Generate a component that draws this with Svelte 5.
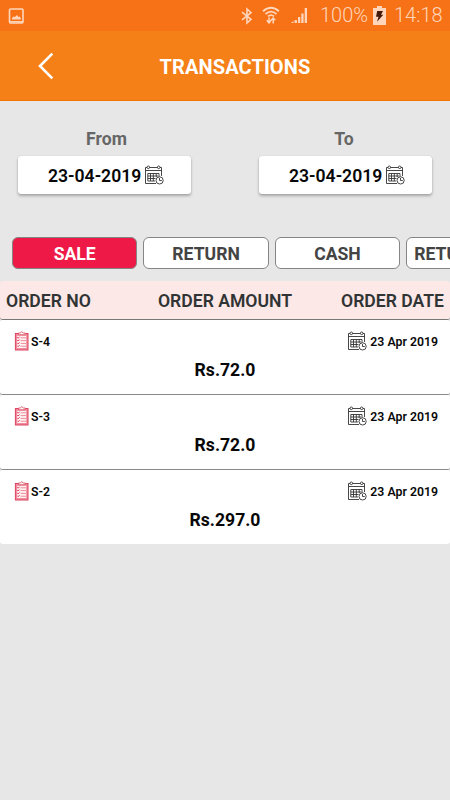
<script lang="ts">
    const tabs = ['SALE', 'RETURN', 'CASH', 'RETURN CASH'];
    let active = $state(0);

    const ranges = [
        { label: 'From', date: '23-04-2019' },
        { label: 'To', date: '23-04-2019' },
    ];

    const orders = [
        { no: 'S-4', amount: 'Rs.72.0', date: '23 Apr 2019' },
        { no: 'S-3', amount: 'Rs.72.0', date: '23 Apr 2019' },
        { no: 'S-2', amount: 'Rs.297.0', date: '23 Apr 2019' },
    ];
</script>

{#snippet calendar()}
    <svg class="calendar" viewBox="0 0 20 20" aria-hidden="true">
        <path d="M3 2.5H1.5V18.5H12M5.5 2.5H13.5M16 2.5H17.5V11M1.5 5.5H17.5" />
        <path d="M3.8 8.5H15V12M3.8 8.5V16H11M3.8 11H14M3.8 13.5H11.5M6.5 8.5V16M9.3 8.5V16M12.2 8.5V12" />
        <circle cx="4.3" cy="2.3" r="1.3" />
        <circle cx="14.7" cy="2.3" r="1.3" />
        <circle class="clock" cx="15.6" cy="15.4" r="3.6" />
        <path d="M15.5 13V15.5H17.8" />
    </svg>
{/snippet}

<div class="screen">
    <div class="status">
        <svg class="picture" width="16" height="16" viewBox="0 0 16 16" aria-hidden="true">
            <rect x="1.5" y="1" width="13.5" height="14" rx="1" fill="none" stroke="currentColor" stroke-width="1.6" />
            <path d="M4 11.5V10L5.5 8.5L7 9L9 7L10.5 9L11.5 8.5L12.8 10V11.5Z" fill="currentColor" />
            <path d="M1.5 13.8H15" stroke="currentColor" stroke-width="1.5" />
        </svg>
        <div class="indicators">
            <svg width="12" height="18" viewBox="0 0 12 18" fill="none" stroke="currentColor" stroke-width="1.6" aria-hidden="true">
                <path d="M1 5.2L10 12.4L6 16V2L10 5.6L1 12.8" />
            </svg>
            <svg class="wifi" width="18" height="19" viewBox="0 0 18 19" fill="none" stroke="currentColor" stroke-width="1.8" aria-hidden="true">
                <path d="M1 5.3Q9 -1.7 17 5.3M3.5 8Q9 3.2 14.5 8M6 10.4Q9 7.8 12 10.4" />
                <path d="M7 11.5V16.5M4.8 14.3L7 17L9 14.3M11.2 17.5V12.5M9 14.2L11.2 12L13.3 14.2" stroke-width="1.5" />
            </svg>
            <svg class="signal" width="18" height="17" viewBox="0 0 18 17" fill="currentColor" aria-hidden="true">
                <path d="M1 16L3.5 14V16ZM4.6 13H6.9V16H4.6ZM8 10H10.3V16H8ZM11.3 6.5H13.6V16H11.3ZM14.7 1H17V16H14.7Z" />
            </svg>
            <span class="percent">100%</span>
            <svg class="battery" width="13" height="19" viewBox="0 0 13 19" aria-hidden="true">
                <path d="M0 2H4V0H9V2H13V19H0Z" fill="currentColor" />
                <path d="M4.2 5H10L8 8.7H10.3L4 15.8L5.5 10.8H3Z" fill="#42190a" />
            </svg>
            <span class="time">14:18</span>
        </div>
    </div>

    <header>
        <button class="back" aria-label="Back">
            <svg width="16" height="28" viewBox="0 0 16 28" fill="none" stroke="#fff" stroke-width="2.6" aria-hidden="true">
                <path d="M14.3 1.6L2 14L14.3 26.4" />
            </svg>
        </button>
        <h1>TRANSACTIONS</h1>
    </header>

    <div class="ranges">
        {#each ranges as range}
            <div class="range">
                <span class="range-label">{range.label}</span>
                <button class="date">
                    <span>{range.date}</span>
                    {@render calendar()}
                </button>
            </div>
        {/each}
    </div>

    <div class="tabs">
        {#each tabs as tab, i}
            <button class="tab" class:active={active === i} onclick={() => (active = i)}>{tab}</button>
        {/each}
    </div>

    <div class="columns">
        <span>ORDER NO</span>
        <span>ORDER AMOUNT</span>
        <span>ORDER DATE</span>
    </div>

    {#each orders as order}
        <div class="order">
            <div class="info">
                <svg class="list" width="16" height="20" viewBox="0 0 16 20" fill="none" aria-hidden="true">
                    <rect x="1.4" y="2.5" width="12.6" height="16.5" fill="#f08c9d" stroke="#dc4560" />
                    <rect x="3.2" y="4.8" width="9" height="12.2" fill="#fff3f4" />
                    <path d="M4.5 3.8V2H6.2Q7.8 -.6 9.4 2H11.2V3.8Z" fill="#fff" stroke="#dc5268" stroke-width=".9" />
                    <path d="M6.6 6.8H12M6.6 9.6H12M6.6 12.4H12M6.6 15.2H12" stroke="#ed8a99" />
                    <path d="M3.4 6.4L4.2 7.2L5.5 5.8M3.4 9.2L4.2 10L5.5 8.6M3.4 12L4.2 12.8L5.5 11.4M3.4 14.8L4.2 15.6L5.5 14.2" stroke="#e0284a" />
                </svg>
                <span class="number">{order.no}</span>
                {@render calendar()}
                <span class="day">{order.date}</span>
            </div>
            <div class="amount">{order.amount}</div>
        </div>
    {/each}
</div>

<style>
    :global(body) {
        background: #e7e7e7;
    }

    .screen {
        width: 450px;
        height: 800px;
        overflow: hidden;
        background: #e7e7e7;
        color: #080808;
        font-family: Roboto, sans-serif;
    }

    button {
        padding: 0;
        border: 0;
        background: none;
        color: inherit;
        font: inherit;
        cursor: pointer;
    }

    svg {
        display: block;
        flex: none;
    }

    .status {
        display: flex;
        align-items: center;
        justify-content: space-between;
        box-sizing: border-box;
        height: 31px;
        padding: 0 7px 0 8px;
        background: #f77117;
        color: #ffd6bb;
    }

    .indicators {
        display: flex;
        align-items: center;
        font-size: 20px;
        font-weight: 300;
        line-height: 31px;
    }

    .wifi {
        margin-left: 9px;
    }

    .signal {
        margin-left: 10px;
    }

    .percent {
        width: 47px;
        margin-left: 12px;
    }

    .battery {
        margin-left: 6px;
    }

    .time {
        width: 49px;
        margin-left: 8px;
    }

    header {
        display: grid;
        grid-template-columns: 93px 1fr 93px;
        align-items: center;
        box-sizing: border-box;
        height: 70px;
        border-bottom: 1px solid #ef7606;
        background: #f58017;
    }

    .back {
        padding-left: 38px;
    }

    h1 {
        margin: 2px 0 0;
        padding-left: 20px;
        color: #fff;
        font-size: 20px;
        font-weight: 700;
        letter-spacing: .1px;
        line-height: 24px;
        text-align: center;
    }

    .ranges {
        display: flex;
        justify-content: space-between;
        padding: 28px 18px 0;
    }

    .range {
        display: flex;
        flex-direction: column;
        width: 173px;
    }

    .range-label {
        padding-left: 4px;
        color: #666;
        font-size: 17.6px;
        font-weight: 700;
        line-height: 20px;
        text-align: center;
    }

    .range:last-child .range-label {
        padding: 0 3px 0 0;
    }

    .date {
        display: flex;
        align-items: center;
        gap: 2px;
        height: 38px;
        margin-top: 7px;
        padding-left: 30px;
        border-radius: 3px;
        background: #fff;
        box-shadow: 0 2px 3px rgba(0, 0, 0, .28), 0 0 1px rgba(0, 0, 0, .2);
        font-size: 17.6px;
        font-weight: 600;
    }

    .date span {
        width: 94px;
        padding-top: 2px;
        line-height: 20px;
        text-align: left;
        white-space: nowrap;
    }

    .calendar {
        width: 20px;
        height: 20px;
        fill: none;
        stroke: #333;
        stroke-width: .9;
    }

    .clock {
        fill: #fff;
    }

    .tabs {
        display: flex;
        gap: 6px;
        margin-top: 43px;
        padding-left: 12px;
        overflow: hidden;
    }

    .tab {
        flex: none;
        box-sizing: border-box;
        min-width: 125.4px;
        height: 32px;
        padding: 2px 7px 0;
        border: 1px solid #858585;
        border-radius: 6px;
        background: #fff;
        color: #444;
        font-size: 17.6px;
        font-weight: 700;
    }

    .active {
        background: #ee1946;
        color: #fff;
    }

    .columns {
        display: grid;
        grid-template-columns: 1fr auto 1fr;
        box-sizing: border-box;
        height: 39px;
        margin-top: 12px;
        padding: 0 6px;
        border-bottom: 1px solid #777;
        border-radius: 3px;
        background: #fce8e6;
        color: #303434;
        font-size: 17.6px;
        font-weight: 600;
        line-height: 41px;
    }

    .columns span:last-child {
        text-align: right;
    }

    .order {
        box-sizing: border-box;
        height: 75px;
        padding-top: 10px;
        border-bottom: 1px solid #888;
        border-radius: 3px;
        background: #fff;
    }

    .order:last-child {
        height: 74px;
        border-bottom: 0;
    }

    .info {
        display: flex;
        align-items: center;
        height: 22px;
        padding: 0 12px 0 14px;
        font-size: 12.3px;
        font-weight: 600;
        line-height: 16px;
    }

    .number {
        margin: 0 auto 0 1px;
        padding-top: 1px;
    }

    .day {
        margin-left: 3px;
        padding-top: 1px;
    }

    .amount {
        margin-top: 8px;
        font-size: 17.6px;
        font-weight: 700;
        line-height: 20px;
        text-align: center;
    }
</style>
